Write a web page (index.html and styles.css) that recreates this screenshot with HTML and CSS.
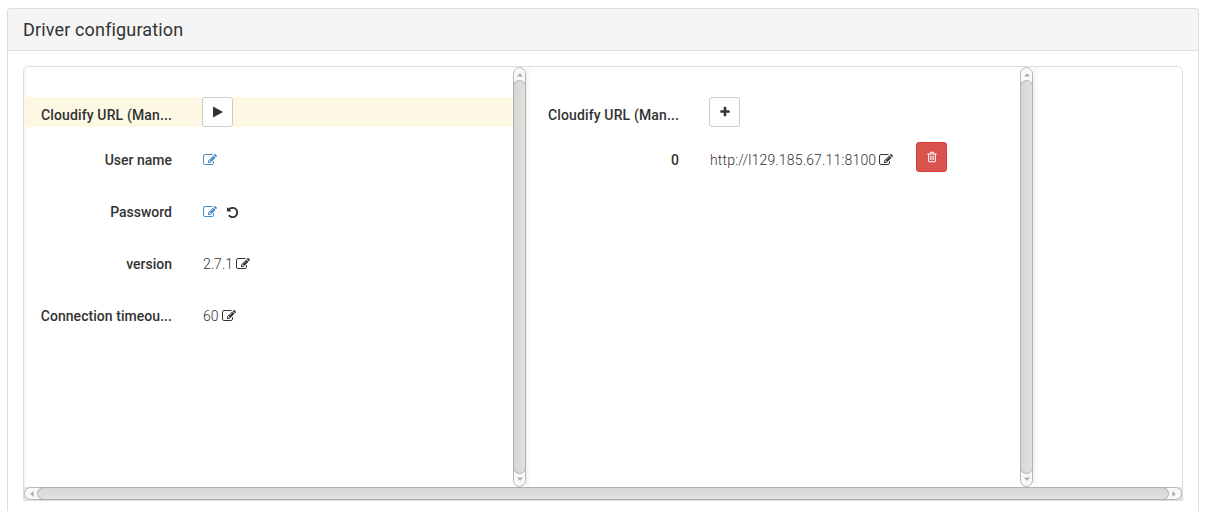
FILE: index.html
```
<!DOCTYPE html>
<html lang="en">
<head>
<meta charset="utf-8">
<title>Driver configuration</title>
<link rel="stylesheet" href="styles.css">
</head>
<body>
<svg class="defs" aria-hidden="true">
  <symbol id="edit" viewBox="0 0 1792 1792"><path d="M888 1184l116-116-152-152-116 116v56h96v96h56zm440-720q-16-16-33 1l-350 350q-17 17-1 33t33-1l350-350q17-17 1-33zm80 594v190q0 119-84.500 203.500t-203.500 84.500h-832q-119 0-203.500-84.500t-84.500-203.500v-832q0-119 84.500-203.500t203.500-84.500h832q63 0 117 25 15 7 18 23 3 17-9 29l-49 49q-14 14-32 8-23-6-45-6h-832q-66 0-113 47t-47 113v832q0 66 47 113t113 47h832q66 0 113-47t47-113v-126q0-13 9-22l64-64q15-15 35-7t20 29zm-96-738l288 288-672 672h-288v-288zm444 132l-92 92-288-288 92-92q28-28 68-28t68 28l152 152q28 28 28 68t-28 68z"/></symbol>
  <symbol id="undo" viewBox="0 0 1792 1792"><path d="M1664 896q0 156-61 298t-164 245-245 164-298 61q-172 0-327-72.500t-264-204.500q-7-10-6.500-22.500t8.500-20.500l137-138q10-9 25-9 16 2 23 12 73 95 179 147t225 52q104 0 198.500-40.500t163.500-109.500 109.500-163.500 40.500-198.500-40.500-198.500-109.500-163.500-163.500-109.500-198.500-40.500q-98 0-188 35.500t-160 101.500l137 138q31 30 14 69-17 40-59 40h-448q-26 0-45-19t-19-45v-448q0-42 40-59 39-17 69 14l130 129q107-101 244.500-156.500t284.500-55.500q156 0 298 61t245 164 164 245 61 298z"/></symbol>
  <symbol id="plus" viewBox="0 0 1792 1792"><path d="M1600 736v192q0 40-28 68t-68 28h-416v416q0 40-28 68t-68 28h-192q-40 0-68-28t-28-68v-416h-416q-40 0-68-28t-28-68v-192q0-40 28-68t68-28h416v-416q0-40 28-68t68-28h192q40 0 68 28t28 68v416h416q40 0 68 28t28 68z"/></symbol>
  <symbol id="trash" viewBox="0 0 1792 1792"><path d="M704 736v576q0 14-9 23t-23 9h-64q-14 0-23-9t-9-23v-576q0-14 9-23t23-9h64q14 0 23 9t9 23zm256 0v576q0 14-9 23t-23 9h-64q-14 0-23-9t-9-23v-576q0-14 9-23t23-9h64q14 0 23 9t9 23zm256 0v576q0 14-9 23t-23 9h-64q-14 0-23-9t-9-23v-576q0-14 9-23t23-9h64q14 0 23 9t9 23zm128 724v-948h-896v948q0 22 7 40.500t14.500 27 10.500 8.500h832q3 0 10.500-8.500t14.500-27 7-40.500zm-672-1076h448l-48-117q-7-9-17-11h-317q-10 2-17 11zm928 32v64q0 14-9 23t-23 9h-96v948q0 83-47 143.500t-113 60.500h-832q-66 0-113-58.500t-47-141.500v-952h-96q-14 0-23-9t-9-23v-64q0-14 9-23t23-9h309l70-167q15-37 54-63t79-26h320q40 0 79 26t54 63l70 167h309q14 0 23 9t9 23z"/></symbol>
  <symbol id="play" viewBox="0 0 10 12"><path d="M0 .5L10 6L0 11.500z"/></symbol>
  <symbol id="up" viewBox="0 0 6 4"><path d="M0 3.500L3 .3L6 3.500z"/></symbol>
  <symbol id="down" viewBox="0 0 6 4"><path d="M0 .5L3 3.700L6 .5z"/></symbol>
  <symbol id="left" viewBox="0 0 4 6"><path d="M3.500 0L.3 3L3.500 6z"/></symbol>
  <symbol id="right" viewBox="0 0 4 6"><path d="M.5 0L3.700 3L.5 6z"/></symbol>
</svg>
<section class="panel">
  <header class="panel-heading">Driver configuration</header>
  <div class="panel-body">
    <div class="browser">
      <div class="panes">
        <div class="pane pane-first">
          <div class="form">
            <div class="row row-active"><span class="label wide">Cloudify URL (Man...</span><button class="btn"><svg class="play"><use href="#play"/></svg></button></div>
            <div class="row"><span class="label">User name</span><span class="value"><svg class="icon link"><use href="#edit"/></svg></span></div>
            <div class="row"><span class="label">Password</span><span class="value"><svg class="icon link"><use href="#edit"/></svg><svg class="icon undo"><use href="#undo"/></svg></span></div>
            <div class="row"><span class="label">version</span><span class="value">2.7.1<svg class="icon after"><use href="#edit"/></svg></span></div>
            <div class="row"><span class="label long">Connection timeou...</span><span class="value">60<svg class="icon after"><use href="#edit"/></svg></span></div>
          </div>
          <div class="vbar"><svg class="arrow-v"><use href="#up"/></svg><div class="vthumb"></div><svg class="arrow-v"><use href="#down"/></svg></div>
        </div>
        <div class="pane">
          <div class="form">
            <div class="row row-active plain"><span class="label wide">Cloudify URL (Man...</span><button class="btn"><svg class="plus"><use href="#plus"/></svg></button></div>
            <div class="row"><span class="label">0</span><span class="value"><span class="url">http://l129.185.67.11:8100</span><svg class="icon after"><use href="#edit"/></svg></span><button class="btn danger"><svg class="trash"><use href="#trash"/></svg></button></div>
          </div>
          <div class="vbar"><svg class="arrow-v"><use href="#up"/></svg><div class="vthumb"></div><svg class="arrow-v"><use href="#down"/></svg></div>
        </div>
      </div>
      <div class="hbar"><div class="htrack"><svg class="arrow-h"><use href="#left"/></svg><div class="hthumb"></div><svg class="arrow-h"><use href="#right"/></svg></div></div>
    </div>
  </div>
</section>
</body>
</html>
```
FILE: styles.css
```
* { box-sizing: border-box; }
html, body { height: 100%; }
body {
  margin: 0;
  padding: 8px 10px 0 7px;
  overflow: hidden;
  background: #fff;
  color: #333;
  font: 300 14px/20px Roboto, "Liberation Sans", sans-serif;
}
.defs { display: none; }
svg { display: block; fill: currentColor; }
.panel {
  height: 503px;
  border: 1px solid #ddd;
  border-bottom: 0;
  border-radius: 4px 4px 0 0;
}
.panel-heading {
  height: 42px;
  padding: 11px 15px 9px;
  border-bottom: 1px solid #ddd;
  border-radius: 3px 3px 0 0;
  background: #f5f5f5;
  font-size: 18px;
  font-weight: 400;
  letter-spacing: .15px;
}
.panel-body { padding: 15px; }
.browser {
  height: 435px;
  border: 1px solid #ddd;
  border-radius: 5px 5px 0 0;
  overflow: hidden;
}
.panes { display: flex; height: 420px; }
.pane {
  display: flex;
  flex: none;
  width: 507px;
  box-shadow: 2px 0 5px rgba(0, 0, 0, .07);
  clip-path: inset(0 -7px 0 0);
}
.pane-first {
  width: 502px;
  box-shadow: inset 2px 0 1px #f5f5f5, 2px 0 5px rgba(0, 0, 0, .07);
}
.form { flex: 1; padding: 30px 0 0 6px; }
.pane-first .form { padding-left: 1px; }
.row { display: flex; height: 52px; align-items: flex-start; }
.row-active { height: 30px; margin-bottom: 15px; background: #fcf8e3; }
.plain { background: none; }
.label {
  width: 147px;
  padding-top: 8px;
  text-align: right;
  font-weight: 500;
  white-space: nowrap;
}
.wide { letter-spacing: .14px; }
.long { letter-spacing: .05px; }
.value {
  display: flex;
  align-items: center;
  height: 28px;
  padding-top: 8px;
  margin-left: 31px;
  white-space: nowrap;
}
.url { letter-spacing: .17px; }
.icon { width: 14px; height: 14px; }
.link { color: #428bca; }
.after { margin-left: 3px; }
.undo { width: 13px; height: 13px; margin-left: 9px; }
.btn {
  display: flex;
  align-items: center;
  justify-content: center;
  width: 31px;
  height: 30px;
  margin-left: 30px;
  padding: 0;
  border: 1px solid #ccc;
  border-radius: 3px;
  background: #fff;
  color: #333;
}
.play { width: 10px; height: 12px; }
.plus { width: 12px; height: 12px; }
.trash { width: 12px; height: 12px; }
.danger { margin-left: 23px; background: #d9534f; border-color: #d43f3a; color: #fff; }
.vbar {
  display: flex;
  flex-direction: column;
  align-items: center;
  width: 13px;
  height: 420px;
  border: 1px solid #b8b6b3;
  border-radius: 7px;
  background: #f8f8f8;
  color: #aaa;
}
.arrow-v { flex: none; width: 6px; height: 4px; margin: 5px 0 3px; }
.vthumb + .arrow-v { margin: 3px 0 5px; }
.vthumb {
  flex: 1;
  width: 13px;
  border: 1px solid #b3b0ac;
  border-radius: 7px;
  background: linear-gradient(90deg, #d8d6d4, #e2e1df);
}
.hbar { height: 14px; background: #e4e2e0; }
.htrack {
  display: flex;
  align-items: center;
  height: 13px;
  border: 1px solid #b8b6b3;
  border-radius: 7px;
  background: #f8f8f8;
  color: #aaa;
}
.arrow-h { flex: none; width: 4px; height: 6px; margin: 0 3px 0 5px; }
.hthumb + .arrow-h { margin: 0 5px 0 3px; }
.hthumb {
  flex: 1;
  height: 13px;
  border: 1px solid #b3b0ac;
  border-radius: 7px;
  background: linear-gradient(#d8d6d4, #e2e1df);
}
```
